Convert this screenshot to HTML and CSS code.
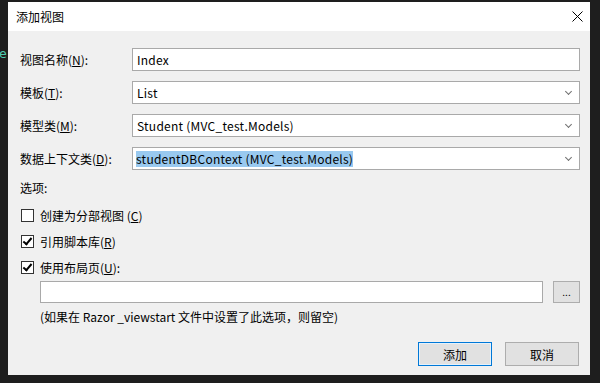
FILE: index.html
```html
<!DOCTYPE html>
<html lang="zh-CN">
<head>
  <meta charset="UTF-8" />
  <title>添加视图</title>
  <link rel="stylesheet" href="styles.css">
</head>
<body>
  <div class="editor-peek">e</div>

  <div class="dialog">
    <div class="title-bar">
      <span class="title">添加视图</span>
      <svg class="close" width="11" height="11" viewBox="0 0 11 11">
        <path d="M0.5 0.5 L10.5 10.5 M10.5 0.5 L0.5 10.5" stroke="#000" stroke-width="1" fill="none"/>
      </svg>
    </div>

    <div class="content">
      <div class="form-grid">
        <label>视图名称(<u>N</u>):</label>
        <div class="field">Index</div>

        <label>模板(<u>T</u>):</label>
        <div class="field dropdown">List<span class="chev"></span></div>

        <label>模型类(<u>M</u>):</label>
        <div class="field dropdown">Student (MVC_test.Models)<span class="chev"></span></div>

        <label>数据上下文类(<u>D</u>):</label>
        <div class="field dropdown"><span class="selected">studentDBContext (MVC_test.Models)</span><span class="chev"></span></div>
      </div>

      <div class="options-title">选项:</div>

      <div class="options">
        <div class="check-row">
          <span class="checkbox"></span>
          <span>创建为分部视图 (<u>C</u>)</span>
        </div>
        <div class="check-row">
          <span class="checkbox checked"></span>
          <span>引用脚本库(<u>R</u>)</span>
        </div>
        <div class="check-row">
          <span class="checkbox checked"></span>
          <span>使用布局页(<u>U</u>):</span>
        </div>
      </div>

      <div class="layout-row">
        <div class="field layout-field"></div>
        <button class="browse">...</button>
      </div>
      <div class="note">(如果在 Razor _viewstart 文件中设置了此选项，则留空)</div>

      <div class="actions">
        <button class="btn primary">添加</button>
        <button class="btn">取消</button>
      </div>
    </div>
  </div>
</body>
</html>
```

FILE: styles.css
```css
body {
  margin: 0;
  width: 600px;
  height: 383px;
  overflow: hidden;
  background-color: #1e1e1e;
  font-family: "Noto Sans CJK SC", "Noto Sans", sans-serif;
  font-size: 12px;
  color: #000;
  position: relative;
}
.editor-peek {
  position: absolute;
  left: -1px;
  top: 46px;
  color: #4ec9b0;
  font-family: "DejaVu Sans Mono", monospace;
  font-size: 13px;
}
.dialog {
  position: relative;
  margin: 2px 0 0 8px;
  width: 582px;
  height: 373px;
  background-color: #f0f0f0;
}
.title-bar {
  height: 29px;
  background-color: #fff;
  display: flex;
  align-items: center;
  justify-content: space-between;
  padding: 0 7px 0 8px;
}
.title {
  font-size: 12px;
}
.content {
  padding: 17px 10px 0 12px;
}
.form-grid {
  display: grid;
  grid-template-columns: 112px 1fr;
  row-gap: 10px;
  align-items: center;
}
.form-grid label {
  line-height: 23px;
}
.field {
  height: 23px;
  box-sizing: border-box;
  border: 1px solid #a9a9a9;
  background-color: #fff;
  padding: 0 4px;
  line-height: 21px;
  display: flex;
  align-items: center;
  white-space: nowrap;
  letter-spacing: 0.25px;
}
.dropdown {
  justify-content: space-between;
}
.chev {
  width: 4px;
  height: 4px;
  border-right: 1px solid #707070;
  border-bottom: 1px solid #707070;
  transform: rotate(45deg);
  margin: -3px 4px 0 0;
}
.selected {
  background-color: #99c9ef;
  line-height: 16px;
  margin-left: -1px;
}
.options-title {
  margin-top: 9px;
  line-height: 18px;
}
.options {
  margin-top: 5px;
}
.check-row {
  display: flex;
  align-items: center;
  gap: 6px;
  height: 26px;
  padding-left: 1px;
}
.checkbox {
  width: 13px;
  height: 13px;
  box-sizing: border-box;
  border: 1px solid #333;
  background-color: #fff;
  position: relative;
}
.checkbox.checked::after {
  content: "";
  position: absolute;
  left: 3px;
  top: 0px;
  width: 3px;
  height: 7px;
  border-right: 2px solid #000;
  border-bottom: 2px solid #000;
  transform: rotate(40deg);
}
.layout-row {
  display: flex;
  gap: 10px;
  margin-top: 1px;
  padding-left: 20px;
}
.layout-field {
  width: 503px;
  height: 22px;
}
.browse {
  width: 27px;
  height: 22px;
  padding: 0;
  border: 1px solid #adadad;
  background-color: #e1e1e1;
  font-family: inherit;
  font-size: 10px;
  line-height: 12px;
}
.note {
  margin-top: 6px;
  padding-left: 20px;
  line-height: 16px;
}
.actions {
  display: flex;
  justify-content: flex-end;
  gap: 13px;
  margin-top: 17px;
  padding-right: 1px;
}
.btn {
  width: 74px;
  height: 24px;
  border: 1px solid #adadad;
  background-color: #e1e1e1;
  font-family: inherit;
  font-size: 12px;
  padding: 0;
}
.btn.primary {
  border-color: #0078d7;
  box-shadow: inset 0 0 0 1px #e5f1fb;
}
```
